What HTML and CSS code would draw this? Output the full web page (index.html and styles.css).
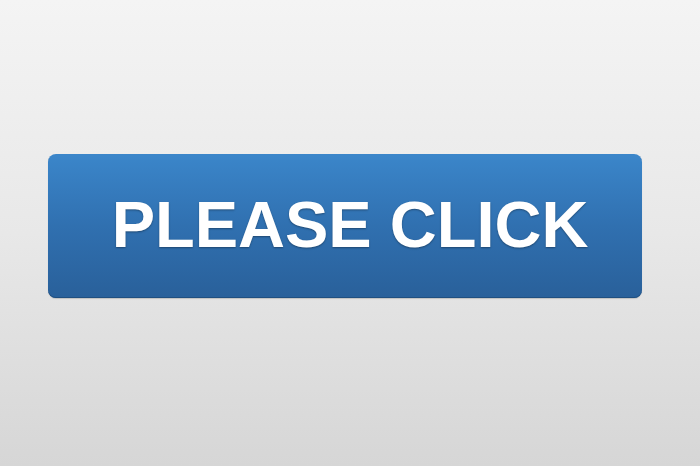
FILE: index.html
```html
<!DOCTYPE html>
<html>
<head>
<meta charset="utf-8">
<link rel="stylesheet" href="styles.css">
</head>
<body>
<main class="stage">
  <button class="cta">PLEASE CLICK</button>
</main>
</body>
</html>
```
FILE: styles.css
```css
html, body {
  margin: 0;
  padding: 0;
  width: 700px;
  height: 466px;
  overflow: hidden;
}
body {
  background: linear-gradient(to bottom, #f4f4f4 0%, #e8e8e8 50%, #d6d6d6 100%);
}
.stage {
  box-sizing: border-box;
  height: 466px;
  padding: 154px 58px 0 48px;
  display: flex;
  align-items: flex-start;
}
.cta {
  box-sizing: border-box;
  width: 594px;
  height: 144px;
  border: none;
  border-radius: 8px;
  background: linear-gradient(to bottom, #3b86ca 0%, #3070b0 50%, #29609a 100%);
  box-shadow: inset 0 -1px 0 #1f4f80, 0 1px 1px rgba(0,0,0,0.15);
  color: #ffffff;
  font-family: "Liberation Sans", Arial, sans-serif;
  font-weight: bold;
  font-size: 65px;
  letter-spacing: 0;
  padding: 0 0 4px 10px;
  text-shadow: 0 1px 2px rgba(0,0,0,0.35);
  display: flex;
  align-items: center;
  justify-content: center;
  line-height: 1;
}
```
